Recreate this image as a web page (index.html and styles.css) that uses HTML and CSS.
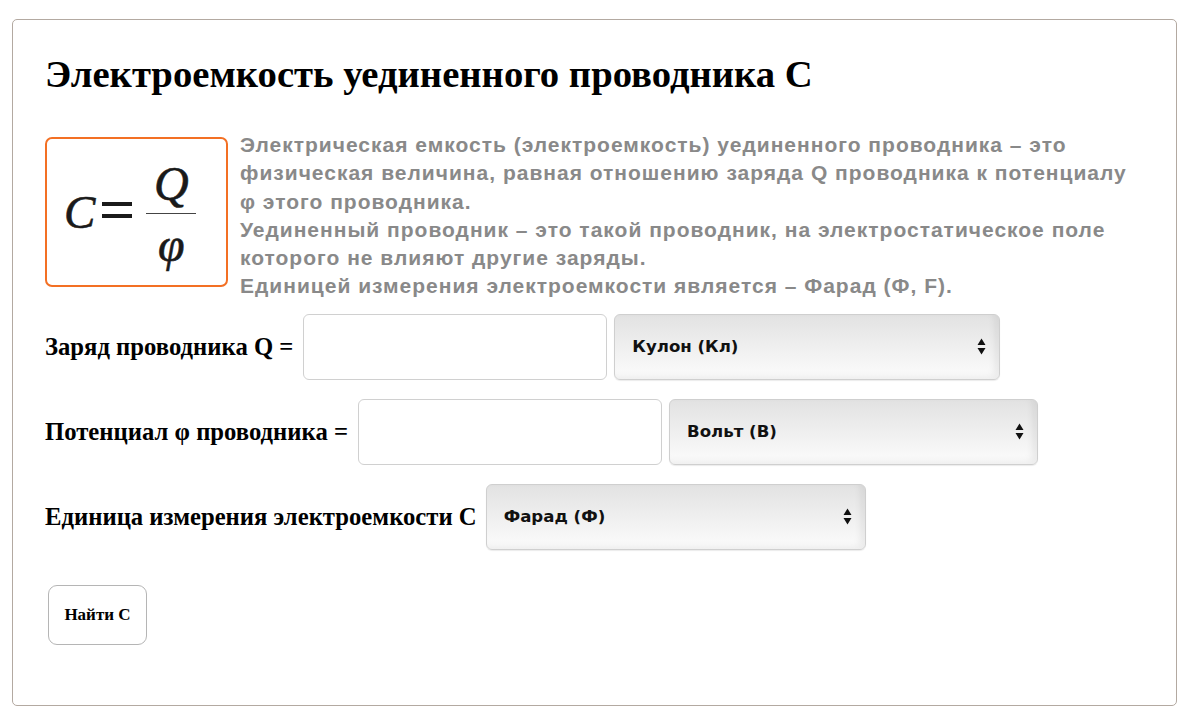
FILE: index.html
```html
<!DOCTYPE html>
<html lang="ru">
<head>
<meta charset="utf-8">
<title>Электроемкость уединенного проводника С</title>
<link rel="stylesheet" href="styles.css">
</head>
<body>
<div class="card">
  <h2 class="title">Электроемкость уединенного проводника С</h2>
  <div class="intro">
    <div class="formula">
      <span class="f-c">C</span>
      <span class="f-eq"><span class="eq-bar"></span><span class="eq-bar"></span></span>
      <span class="frac">
        <span class="f-num">Q</span>
        <span class="f-bar"></span>
        <span class="f-den">φ</span>
      </span>
    </div>
    <p class="desc">Электрическая емкость (электроемкость) уединенного проводника – это физическая величина, равная отношению заряда Q проводника к потенциалу φ этого проводника.<br>Уединенный проводник – это такой проводник, на электростатическое поле которого не влияют другие заряды.<br>Единицей измерения электроемкости является – Фарад (Ф, F).</p>
  </div>
  <div class="row row-1">
    <label class="lbl">Заряд проводника Q =</label>
    <input class="field" type="text">
    <div class="sel sel-1"><span>Кулон (Кл)</span><svg class="arr" viewBox="0 0 9 17" width="9" height="17"><path d="M4.5 0.5 L8.5 7 L0.5 7 Z M4.5 16.5 L8.5 10 L0.5 10 Z" fill="#111"/></svg></div>
  </div>
  <div class="row">
    <label class="lbl">Потенциал φ проводника =</label>
    <input class="field" type="text">
    <div class="sel sel-2"><span>Вольт (В)</span><svg class="arr" viewBox="0 0 9 17" width="9" height="17"><path d="M4.5 0.5 L8.5 7 L0.5 7 Z M4.5 16.5 L8.5 10 L0.5 10 Z" fill="#111"/></svg></div>
  </div>
  <div class="row">
    <label class="lbl lbl-3">Единица измерения электроемкости С</label>
    <div class="sel sel-3"><span>Фарад (Ф)</span><svg class="arr" viewBox="0 0 9 17" width="9" height="17"><path d="M4.5 0.5 L8.5 7 L0.5 7 Z M4.5 16.5 L8.5 10 L0.5 10 Z" fill="#111"/></svg></div>
  </div>
  <button class="btn" type="button">Найти С</button>
</div>
</body>
</html>
```
FILE: styles.css
```css
html, body {
  margin: 0;
  padding: 0;
  background: #fff;
}
body {
  padding: 19px 0 0 12px;
  font-family: "Liberation Serif", "Times New Roman", serif;
  color: #000;
}
.card {
  box-sizing: border-box;
  width: 1165px;
  height: 687px;
  border: 1.5px solid #b3a9a1;
  border-radius: 5px;
  padding: 0 33px 0 32px;
}
.title {
  margin: 34px 0 0 0;
  font-size: 38.7px;
  font-weight: bold;
  line-height: 40px;
  white-space: nowrap;
}
.intro {
  display: flex;
  align-items: flex-start;
  margin-top: 43px;
}
.formula {
  box-sizing: border-box;
  flex: none;
  width: 183px;
  height: 150px;
  border: 2px solid #f37024;
  border-radius: 7px;
  display: flex;
  align-items: center;
  padding-left: 17px;
  font-family: "Liberation Serif", serif;
  color: #1a1a1a;
}
.f-c {
  font-style: italic;
  font-size: 47px;
  line-height: 1;
  -webkit-text-stroke: 0.6px #1a1a1a;
}
.f-eq {
  display: flex;
  flex-direction: column;
  justify-content: space-between;
  width: 30px;
  height: 16px;
  margin-left: 7px;
  margin-top: -4px;
}
.eq-bar {
  display: block;
  height: 4px;
  background: #1a1a1a;
}
.frac {
  display: flex;
  flex-direction: column;
  align-items: center;
  margin-left: 14px;
  margin-top: 4px;
}
.f-num {
  font-style: italic;
  font-size: 48px;
  line-height: 46px;
  -webkit-text-stroke: 0.6px #1a1a1a;
}
.f-bar {
  width: 50px;
  height: 1px;
  background: #444;
  margin: 6px 0 8px;
}
.f-den {
  font-style: italic;
  font-size: 48px;
  line-height: 46px;
  -webkit-text-stroke: 0.6px #1a1a1a;
}
.desc {
  flex: 1;
  margin: -6px 0 0 12px;
  font-family: "Liberation Sans", Arial, sans-serif;
  font-weight: bold;
  font-size: 21px;
  letter-spacing: 1px;
  line-height: 28.3px;
  color: #898989;
}
.row {
  display: flex;
  align-items: center;
  height: 66px;
  margin-top: 19px;
}
.row-1 {
  margin-top: 13px;
}
.lbl {
  font-size: 24.7px;
  font-weight: bold;
  margin-right: 10px;
  white-space: nowrap;
}
.lbl-3 {
  margin-right: 9px;
}
.field {
  box-sizing: border-box;
  width: 304px;
  height: 66px;
  border: 1.5px solid #d0d0d0;
  border-radius: 6px;
  background: #fff;
  margin: 0 7px 0 0;
  padding: 0;
  outline: none;
}
.sel {
  box-sizing: border-box;
  height: 66px;
  border: 1px solid #cfcfcf;
  border-radius: 6px;
  background: linear-gradient(#e2e2e2, #efefef 50%, #fcfcfc);
  box-shadow: inset -5px -3px 6px rgba(0,0,0,0.06), 0 1px 1px rgba(0,0,0,0.08);
  display: flex;
  align-items: center;
  justify-content: space-between;
  padding: 0 13px 0 17px;
  font-family: "DejaVu Sans", Verdana, sans-serif;
  font-weight: bold;
  font-size: 16.6px;
  color: #111;
}
.sel-1 { width: 386px; }
.sel-2 { width: 369px; }
.sel-3 { width: 380px; }
.arr {
  display: block;
}
.btn {
  display: block;
  box-sizing: border-box;
  width: 99px;
  height: 60px;
  margin: 35px 0 0 3px;
  border: 1.5px solid #b5b5b5;
  border-radius: 9px;
  background: #fff;
  font-family: "Liberation Serif", serif;
  font-weight: bold;
  font-size: 17px;
  color: #000;
  padding: 0;
}
```
